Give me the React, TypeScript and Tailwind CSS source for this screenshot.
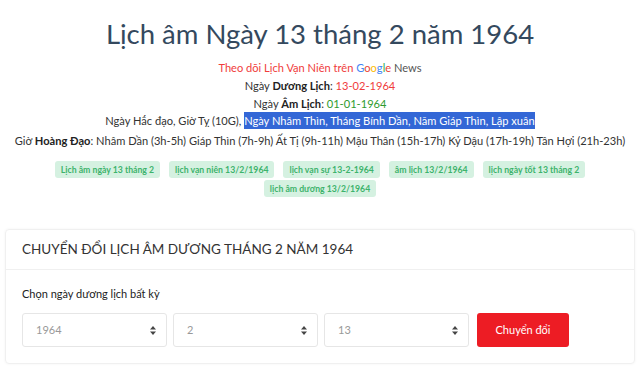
import React from 'react';

const TAGS = [
  'Lịch âm ngày 13 tháng 2',
  'lịch vạn niên 13/2/1964',
  'lịch vạn sự 13-2-1964',
  'âm lịch 13/2/1964',
  'lịch ngày tốt 13 tháng 2',
  'lịch âm dương 13/2/1964',
];

const GIO_HOANG_DAO = 'Nhâm Dần (3h-5h) Giáp Thìn (7h-9h) Ất Tị (9h-11h) Mậu Thân (15h-17h) Kỷ Dậu (17h-19h) Tân Hợi (21h-23h)';

const Select: React.FC<{ value: string }> = ({ value }) => (
  <div className="flex h-[34px] w-[145px] items-center justify-between rounded-[3px] border border-[#e6e6e6] bg-white pl-[13px] pr-[10px] text-[11px] text-[#999]">
    <span>{value}</span>
    {/* up/down caret */}
    <svg width="6" height="9" viewBox="0 0 6 9" className="fill-[#444]">
      <path d="M0 3.5 L3 0 L6 3.5 Z" />
      <path d="M0 5.5 L3 9 L6 5.5 Z" />
    </svg>
  </div>
);

export default function App() {
  return (
    <div className="min-h-[366px] bg-white text-[11.1px] text-[#333] font-['Lato','Liberation_Sans',sans-serif]">
      <div className="flex flex-col items-center pt-[14px] text-center">
        <h1 className="text-[27.5px] leading-[40px] text-[#34495e]">Lịch âm Ngày 13 tháng 2 năm 1964</h1>

        <div className="mt-[5px] flex flex-col items-center leading-[17.8px]">
          <p>
            <span className="text-[#f03c3c]">Theo dõi Lịch Vạn Niên trên </span>
            <span className="text-[#4285f4]">G</span>
            <span className="text-[#ea4335]">o</span>
            <span className="text-[#fbbc05]">o</span>
            <span className="text-[#4285f4]">g</span>
            <span className="text-[#34a853]">l</span>
            <span className="text-[#ea4335]">e</span>
            <span className="text-[#555]"> News</span>
          </p>
          <p>
            Ngày <b className="font-bold text-[#222]">Dương Lịch</b>: <span className="text-[#f03c3c]">13-02-1964</span>
          </p>
          <p>
            Ngày <b className="font-bold text-[#222]">Âm Lịch</b>: <span className="text-[#2e9b2e]">01-01-1964</span>
          </p>
          <p>
            Ngày Hắc đạo, Giờ Tỵ (10G),{' '}
            <span className="bg-[#3367d6] py-[2px] text-white">Ngày Nhâm Thìn, Tháng Bính Dần, Năm Giáp Thìn, Lập xuân</span>
          </p>
          <p className="mt-[2px]">
            Giờ <b className="font-bold text-[#222]">Hoàng Đạo</b>: {GIO_HOANG_DAO}
          </p>
        </div>

        <div className="mt-[11px] flex w-[560px] flex-wrap justify-center gap-x-[9px] gap-y-[2px]">
          {TAGS.map(t => (
            <span key={t} className="rounded-[3px] bg-[#d5f1e1] px-[6px] py-[3px] text-[8.7px] font-bold leading-[11px] text-[#3db36c]">
              {t}
            </span>
          ))}
        </div>
      </div>

      <div className="px-[5px] pt-[32px]">
        <div className="rounded-[4px] border border-[#f0f0f0] shadow-[0_0_3px_rgba(0,0,0,0.05)]">
          <div className="flex h-[40px] items-center border-b border-[#f0f0f0] px-[16px] text-[13.5px] text-[#333]">
            CHUYỂN ĐỔI LỊCH ÂM DƯƠNG THÁNG 2 NĂM 1964
          </div>
          <div className="px-[16px] pb-[16px] pt-[16px]">
            <div className="text-[11px] text-[#222]">Chọn ngày dương lịch bất kỳ</div>
            <div className="mt-[11px] flex gap-[6px]">
              <Select value="1964" />
              <Select value="2" />
              <Select value="13" />
              <button className="ml-[2px] h-[34px] w-[92px] rounded-[3px] bg-[#ed1c24] text-[11px] text-white">Chuyển đổi</button>
            </div>
          </div>
        </div>
      </div>
    </div>
  );
}
